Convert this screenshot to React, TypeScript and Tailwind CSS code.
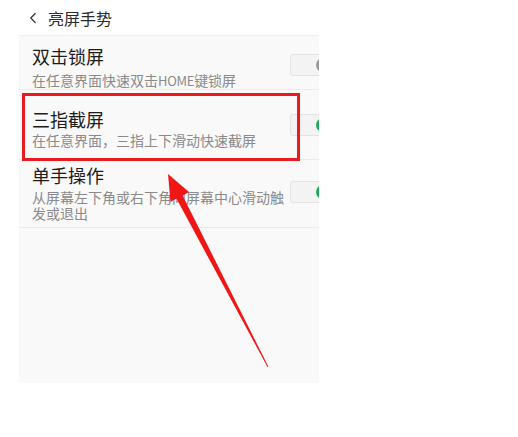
import { ChevronLeft } from "lucide-react";

const CJK = { fontFamily: '"Noto Sans CJK SC", "Noto Sans", sans-serif' };

function Toggle({ on, top }: { on: boolean; top: string }) {
  return (
    <div className={`relative ml-auto -mr-[15px] h-[22px] w-[44px] shrink-0 self-start rounded-[3px] border border-[#e3e3e3] bg-[#f3f3f3] ${top}`}>
      <div
        className={`absolute left-[25px] top-[3px] h-[14px] w-[14px] rounded-full ${on ? "bg-[#1ea85c]" : "bg-[#9a9a9a]"}`}
      />
    </div>
  );
}

export default function App() {
  return (
    <div className="relative h-[437px] w-[518px] bg-white" style={CJK}>
      <div className="ml-[19px] h-[383px] w-[300px] overflow-hidden bg-[#f9f9f9]">
        <div className="flex h-[36px] items-center border-b border-[#efefef] bg-white pl-[6px] text-[16px] text-[#2a2a2a]">
          <ChevronLeft size={18} strokeWidth={1.6} className="-ml-[1px] text-[#333]" />
          <span className="ml-[6px]">亮屏手势</span>
        </div>

        <div className="flex h-[54px] border-b border-[#ebebeb] pl-[13px] ml-[0px]">
          <div className="pt-[8px]">
            <div className="text-[18px] leading-[24px] text-[#1c1c1c]">双击锁屏</div>
            <div className="mt-[3px] text-[14px] leading-[18px] text-[#8a8a8a]">
              在任意界面快速双击<span className="text-[13px] tracking-[-0.3px]">HOME</span>键锁屏
            </div>
          </div>
          <Toggle on={false} top="mt-[18px]" />
        </div>

        <div className="flex h-[70px] border-b border-[#ebebeb] pl-[13px]">
          <div className="pt-[17px]">
            <div className="text-[18px] leading-[24px] text-[#1c1c1c]">三指截屏</div>
            <div className="text-[14px] leading-[18px] text-[#8a8a8a]">在任意界面，三指上下滑动快速截屏</div>
          </div>
          <Toggle on={true} top="mt-[24px]" />
        </div>

        <div className="flex h-[68px] border-b border-[#ebebeb] pl-[13px]">
          <div className="w-[256px] pt-[3px]">
            <div className="text-[18px] leading-[24px] text-[#1c1c1c]">单手操作</div>
            <div className="mt-[2px] text-[14px] leading-[16px] text-[#8a8a8a]">
              从屏幕左下角或右下角向屏幕中心滑动触发或退出
            </div>
          </div>
          <Toggle on={true} top="mt-[21px]" />
        </div>
      </div>

      <div className="absolute left-[22px] top-[93px] h-[68px] w-[278px] border-[3px] border-[#ea1a1f]" />

      <svg className="absolute left-0 top-0" width="518" height="437" viewBox="0 0 518 437">
        <polygon
          fill="#f01616"
          points="168,174 189,192 182.6,195.4 268.4,366.8 267.6,367.2 176.4,198.6 170.5,202"
        />
      </svg>
    </div>
  );
}
